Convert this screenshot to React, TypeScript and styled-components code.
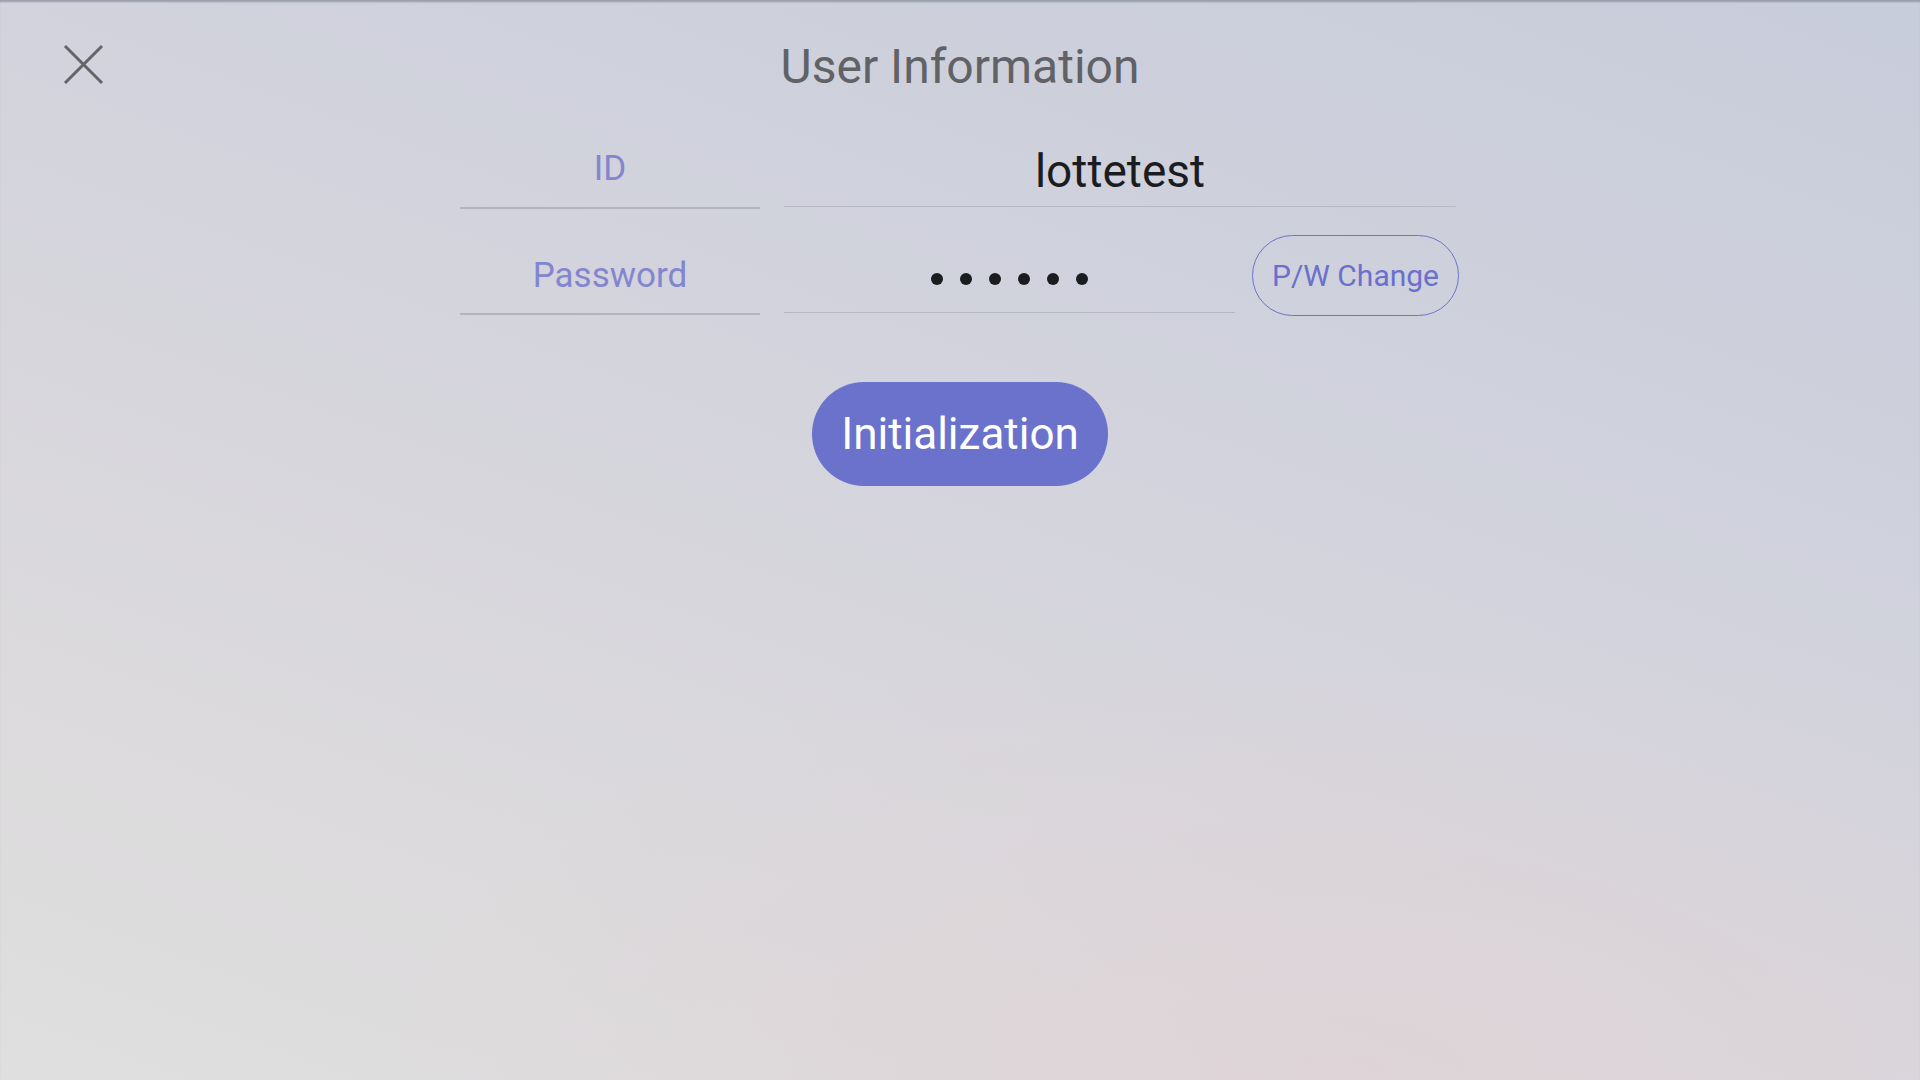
import styled, { createGlobalStyle } from 'styled-components';

const GlobalStyle = createGlobalStyle`
  html, body {
    margin: 0;
    padding: 0;
  }
  body {
    font-family: Roboto, 'Noto Sans', sans-serif;
  }
  * {
    box-sizing: border-box;
  }
`;

const Page = styled.div`
  min-height: 100vh;
  display: flex;
  flex-direction: column;
  align-items: center;
  background:
    radial-gradient(ellipse 50% 42% at 70% 100%, rgba(224, 210, 213, 0.7), rgba(224, 210, 213, 0) 100%),
    linear-gradient(200deg, #c8cddb 0%, #cfd1dc 30%, #d7d6dc 58%, #dcdadc 78%, #dfdfdf 100%);
  box-shadow: inset 0 3px 2px -1px rgba(110, 114, 128, 0.55);
`;

const Header = styled.header`
  width: 100%;
  display: grid;
  grid-template-columns: 1fr auto 1fr;
  align-items: start;
  padding-top: 38px;
`;

const CloseButton = styled.button`
  justify-self: start;
  margin: 6px 0 0 63px;
  width: 41px;
  height: 41px;
  padding: 0;
  border: none;
  background: none;
  cursor: pointer;
  display: flex;
`;

const Title = styled.h1`
  margin: 0;
  font-size: 48px;
  font-weight: 400;
  line-height: normal;
  color: #616266;
`;

const Form = styled.div`
  margin-top: 26px;
  width: 1000px;
  display: flex;
  flex-direction: column;
  gap: 22px;
`;

const Row = styled.div`
  display: flex;
  align-items: flex-start;
`;

const Label = styled.div<{ $h: number; $pb: number }>`
  width: 300px;
  height: ${({ $h }) => $h}px;
  padding-bottom: ${({ $pb }) => $pb}px;
  display: flex;
  align-items: flex-end;
  justify-content: center;
  border-bottom: 2px solid #b3b4c1;
  font-size: 35px;
  line-height: normal;
  color: #8386cf;
`;

const Value = styled.div<{ $w: number; $h: number; $pb: number }>`
  margin-left: 24px;
  width: ${({ $w }) => $w}px;
  height: ${({ $h }) => $h}px;
  padding-bottom: ${({ $pb }) => $pb}px;
  display: flex;
  align-items: flex-end;
  justify-content: center;
  border-bottom: 1px solid #b7b8c4;
  font-size: 46px;
  line-height: normal;
  color: #1b1c1f;
`;

const Dots = styled.div`
  display: flex;
  gap: 17px;
`;

const Dot = styled.span`
  width: 12px;
  height: 12px;
  border-radius: 50%;
  background: #1b1c1f;
`;

const OutlineButton = styled.button`
  margin: 4px 0 0 17px;
  width: 207px;
  height: 81px;
  border: 1px solid #6b72cf;
  border-radius: 41px;
  background: transparent;
  font-family: Roboto, sans-serif;
  font-size: 30px;
  color: #6a70cc;
  cursor: pointer;
  padding: 0;
`;

const PrimaryButton = styled.button`
  margin-top: 66px;
  width: 296px;
  height: 104px;
  border: none;
  border-radius: 52px;
  background: #6a72cc;
  color: #ffffff;
  font-family: Roboto, sans-serif;
  font-size: 44px;
  cursor: pointer;
  padding: 0 0 1px;
`;

export default function App() {
  return (
    <>
      <GlobalStyle />
      <Page>
        <Header>
          <CloseButton aria-label="Close">
            <svg width="41" height="41" viewBox="0 0 41 41">
              <path d="M2 2 L39 39 M39 2 L2 39" stroke="#636468" strokeWidth="3" fill="none" />
            </svg>
          </CloseButton>
          <Title>User Information</Title>
          <div />
        </Header>

        <Form>
          <Row>
            <Label $h={88} $pb={18}>ID</Label>
            <Value $w={672} $h={86} $pb={8}>lottetest</Value>
          </Row>
          <Row>
            <Label $h={84} $pb={17}>Password</Label>
            <Value $w={451} $h={82} $pb={27}>
              <Dots>
                {Array.from({ length: 6 }).map((_, i) => (
                  <Dot key={i} />
                ))}
              </Dots>
            </Value>
            <OutlineButton>P/W Change</OutlineButton>
          </Row>
        </Form>

        <PrimaryButton>Initialization</PrimaryButton>
      </Page>
    </>
  );
}
